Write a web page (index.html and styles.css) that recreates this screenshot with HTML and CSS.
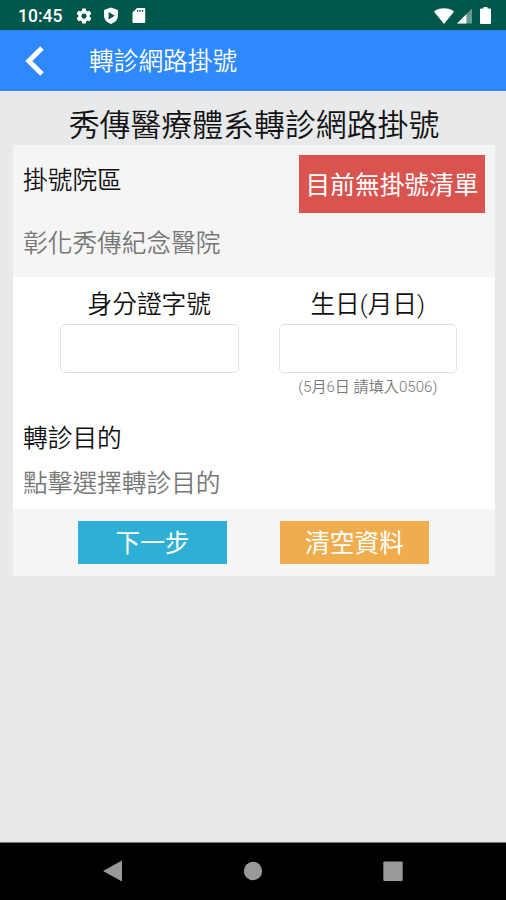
FILE: index.html
```html
<!DOCTYPE html>
<html lang="zh-Hant">
<head>
<meta charset="utf-8">
<title>轉診網路掛號</title>
<link rel="stylesheet" href="styles.css">
</head>
<body>
<div class="screen">
  <div class="status">
    <span class="clock">10:45</span>
    <svg class="gear" viewBox="0 0 24 24"><path d="M19.43 12.98c.04-.32.07-.64.07-.98s-.03-.66-.07-.98l2.11-1.65c.19-.15.24-.42.12-.64l-2-3.46c-.12-.22-.39-.3-.61-.22l-2.49 1c-.52-.4-1.08-.73-1.69-.98l-.38-2.65C14.46 2.18 14.25 2 14 2h-4c-.25 0-.46.18-.49.42l-.38 2.65c-.61.25-1.17.59-1.69.98l-2.49-1c-.23-.09-.49 0-.61.22l-2 3.46c-.13.22-.07.49.12.64l2.11 1.65c-.04.32-.07.65-.07.98s.03.66.07.98l-2.11 1.65c-.19.15-.24.42-.12.64l2 3.46c.12.22.39.3.61.22l2.49-1c.52.4 1.08.73 1.69.98l.38 2.65c.03.24.24.42.49.42h4c.25 0 .46-.18.49-.42l.38-2.65c.61-.25 1.17-.59 1.69-.98l2.49 1c.23.09.49 0 .61-.22l2-3.46c.12-.22.07-.49-.12-.64l-2.11-1.65zM12 15.5c-1.93 0-3.5-1.57-3.5-3.5s1.57-3.5 3.5-3.5 3.5 1.57 3.5 3.5-1.57 3.5-3.5 3.5z"/></svg>
    <svg class="shield" viewBox="0 0 16 18"><path fill-rule="evenodd" d="M8 .5 15 3v5.500c0 4-2.800 7-7 8.500-4.200-1.500-7-4.500-7-8.500V3zM5.600 5v7.400L11.800 8.700z"/></svg>
    <svg class="sd" viewBox="0 0 14 17"><path fill-rule="evenodd" d="M5 1h7.200c.6 0 1 .4 1 1v13c0 .6-.4 1-1 1H1.500c-.6 0-1-.4-1-1V5.500zM5 3v1.800h1.300V3zm2.400 0v1.800h1.300V3zm2.400 0v1.800h1.300V3z"/></svg>
    <span class="spring"></span>
    <svg class="wifi" viewBox="0 0 20 16"><path d="M0 3.500C5.500-.8 14.500-.8 20 3.500L10 16z"/></svg>
    <svg class="signal" viewBox="0 0 16 16"><path opacity=".4" d="M16 0v16H0z"/><path d="M10 6v10H0z"/></svg>
    <svg class="battery" viewBox="0 0 11 17"><path d="M3.500 0h4v1.500H10q1 0 1 1V16q0 1-1 1H1q-1 0-1-1V2.500q0-1 1-1h2.500z"/></svg>
  </div>
  <header class="bar">
    <svg class="back" viewBox="0 0 20 30"><path d="M17 2 3.800 15 17 28"/></svg>
    <span>轉診網路掛號</span>
  </header>
  <main class="content">
    <h1>秀傳醫療體系轉診網路掛號</h1>
    <section class="hospital">
      <div>
        <div class="label">掛號院區</div>
        <div class="value">彰化秀傳紀念醫院</div>
      </div>
      <button class="list">目前無掛號清單</button>
    </section>
    <section class="form">
      <div class="fields">
        <label class="field">身分證字號<input type="text"></label>
        <label class="field">生日(月日)<input type="text"><small>(5月6日 請填入0506)</small></label>
      </div>
      <div class="label purpose">轉診目的</div>
      <div class="value choose">點擊選擇轉診目的</div>
    </section>
    <section class="actions">
      <button class="next">下一步</button>
      <button class="clear">清空資料</button>
    </section>
  </main>
  <nav class="nav">
    <svg viewBox="0 0 20 22"><path d="M19 .5v21L0 11z"/></svg>
    <svg viewBox="0 0 20 22"><circle cx="10" cy="11" r="9.200"/></svg>
    <svg viewBox="0 0 20 22"><rect x=".300" y="1.500" width="19.400" height="19.400" rx="1"/></svg>
  </nav>
</div>
</body>
</html>
```
FILE: styles.css
```css
* { box-sizing: border-box; }
body { margin: 0; font-family: Roboto, "Noto Sans CJK TC", sans-serif; font-size: 24.700px; font-weight: 350; color: #111; }
button, input { font: inherit; border: 0; padding: 0; }
.screen { height: 900px; display: flex; flex-direction: column; background: #e8e9eb; }
.status { height: 30px; flex: none; background: #00574b; display: flex; align-items: center; padding: 1px 15px 0 18px; color: #fff; }
.status svg { fill: #fff; flex: none; }
.clock { font-size: 17.500px; font-weight: 500; line-height: 30px; width: 57px; padding-top: 1px; }
.gear { width: 18px; height: 18px; }
.shield { width: 16px; height: 18px; margin-left: 10px; }
.sd { width: 14px; height: 17px; margin-left: 13px; }
.spring { flex: 1; }
.wifi { width: 20px; height: 16px; margin-right: 3px; }
.signal { width: 15px; height: 16px; margin-right: 8px; }
.battery { width: 11px; height: 17px; }
.bar { height: 61px; flex: none; background: #2e89ff; color: #fff; display: flex; align-items: center; padding-left: 25px; font-weight: 350; }
.bar span { line-height: 36px; padding-top: 3px; }
.back { width: 20px; height: 30px; margin-right: 44px; fill: none; stroke: #fff; stroke-width: 5; }
.content { flex: 1; padding: 0 11px 0 13px; border-top: 1px solid #f3eff0; }
h1 { margin: 0; height: 53px; line-height: 68px; font-size: 30.900px; font-weight: 350; text-align: center; white-space: nowrap; }
.hospital { height: 132px; background: #f5f5f5; display: flex; justify-content: space-between; padding: 10px 10px 0; }
.label, .value { line-height: 36px; }
.label { padding-top: 8px; }
.value { color: #777; margin-top: 27px; }
.list { width: 186px; height: 58px; padding-bottom: 2px; background: #d9534f; color: #fff; font-weight: 400; white-space: nowrap; }
.form { height: 232px; background: #fff; padding: 9px 10px 0; }
.fields { display: flex; gap: 40px; padding-left: 37px; height: 127px; }
.field { width: 178.500px; display: flex; flex-direction: column; align-items: center; line-height: 38px; }
.field input { width: 100%; height: 49px; flex: none; border: 1px solid #e2e2e2; border-radius: 5px; background: #fff; }
small { font-size: 15.100px; line-height: 28px; color: #777; white-space: nowrap; }
.purpose { height: 46px; }
.choose { margin-top: 7px; }
.actions { height: 67px; background: #f5f5f5; display: flex; gap: 53px; padding: 12px 0 0 65px; }
.actions button { width: 149px; height: 43px; padding-bottom: 3px; color: #fff; font-weight: 400; }
.actions .next { background: #2eafd6; }
.actions .clear { background: #f0ad4e; }
.nav { height: 58px; flex: none; background: #000; display: flex; gap: 120px; justify-content: center; align-items: center; border-top: 1px solid #777; padding-bottom: 2px; }
.nav svg { width: 20px; height: 22px; fill: #999; }
```
